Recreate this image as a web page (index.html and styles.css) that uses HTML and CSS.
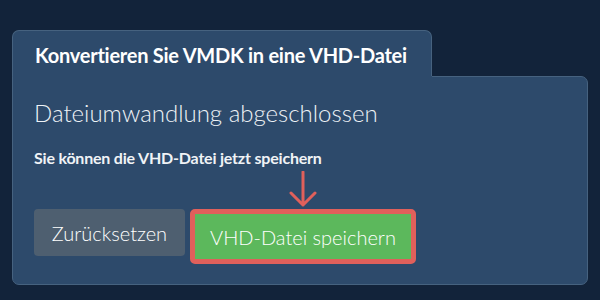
FILE: index.html
```html
<!DOCTYPE html>
<html lang="de">
<head>
    <meta charset="UTF-8">
    <meta name="viewport" content="width=device-width, initial-scale=1.0">
    <title>VMDK in VHD</title>
    <link rel="stylesheet" href="styles.css">
</head>
<body>
    <div class="converter">
        <div class="tab">Konvertieren Sie VMDK in eine VHD-Datei</div>
        <div class="panel">
            <h2>Dateiumwandlung abgeschlossen</h2>
            <p class="hint">Sie können die VHD-Datei jetzt speichern</p>
            <div class="actions">
                <button class="btn btn-reset">Zurücksetzen</button>
                <div class="save-wrap">
                    <svg class="arrow" width="30" height="36" viewBox="0 0 30 36">
                        <path d="M15 1 V34 M3 22 L15 34 L27 22" fill="none" stroke="#e0605b" stroke-width="3" stroke-linecap="round" stroke-linejoin="round"/>
                    </svg>
                    <button class="btn btn-save">VHD-Datei speichern</button>
                </div>
            </div>
        </div>
    </div>
</body>
</html>
```

FILE: styles.css
```css
/* General styling */
body {
    font-family: 'Lato', 'Liberation Sans', sans-serif;
    margin: 0;
    padding: 30px 12px 0 12px;
    background-color: #12233a;
    color: #fff;
}

.converter {
    width: 576px;
}

/* Tab header */
.tab {
    display: inline-block;
    box-sizing: border-box;
    width: 420px;
    height: 47px;
    padding: 12px 0 0 22px;
    font-size: 20px;
    font-weight: bold;
    letter-spacing: -0.25px;
    line-height: 24px;
    background: #2d4a6b;
    border: 1px solid #46627f;
    border-bottom: none;
    border-radius: 7px 7px 0 0;
    vertical-align: bottom;
}

/* Panel */
.panel {
    margin-top: -1px;
    padding: 21px 20px 20px 21px;
    background: #2d4a6b;
    border: 1px solid #46627f;
    border-radius: 0 7px 7px 7px;
    position: relative;
}

.panel::before {
    content: "";
    position: absolute;
    left: 0;
    top: -1px;
    width: 419px;
    height: 1px;
    background: #2d4a6b;
}

h2 {
    margin: 0;
    font-size: 24px;
    font-weight: 300;
    line-height: 29px;
    color: #eef2f6;
}

.hint {
    margin: 21px 0 0 0;
    font-size: 16px;
    font-weight: bold;
    line-height: 19px;
    letter-spacing: -0.2px;
    color: #f0f3f6;
}

.actions {
    display: flex;
    align-items: flex-start;
    gap: 5px;
    margin-top: 42px;
}

.btn {
    font-family: 'Lato', 'Liberation Sans', sans-serif;
    font-size: 20px;
    font-weight: 300;
    color: #fff;
    border: none;
    border-radius: 4px;
    cursor: pointer;
}

.btn-reset {
    width: 151px;
    height: 47px;
    background-color: #4e5f70;
}

.save-wrap {
    position: relative;
}

.btn-save {
    width: 226px;
    height: 55px;
    background-color: #5cb85c;
    border: 5px solid #e0605b;
    border-radius: 5px;
}

.arrow {
    position: absolute;
    left: 98px;
    top: -38px;
}
```
